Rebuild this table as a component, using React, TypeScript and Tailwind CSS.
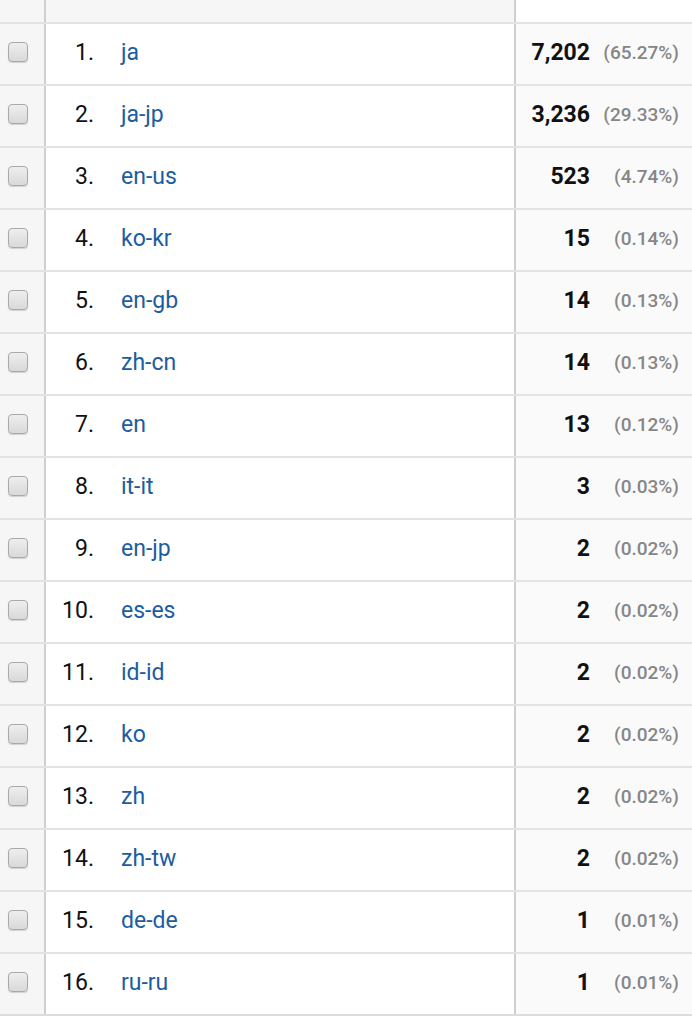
const rows: [string, string, string][] = [
  ["ja", "7,202", "(65.27%)"],
  ["ja-jp", "3,236", "(29.33%)"],
  ["en-us", "523", "(4.74%)"],
  ["ko-kr", "15", "(0.14%)"],
  ["en-gb", "14", "(0.13%)"],
  ["zh-cn", "14", "(0.13%)"],
  ["en", "13", "(0.12%)"],
  ["it-it", "3", "(0.03%)"],
  ["en-jp", "2", "(0.02%)"],
  ["es-es", "2", "(0.02%)"],
  ["id-id", "2", "(0.02%)"],
  ["ko", "2", "(0.02%)"],
  ["zh", "2", "(0.02%)"],
  ["zh-tw", "2", "(0.02%)"],
  ["de-de", "1", "(0.01%)"],
  ["ru-ru", "1", "(0.01%)"],
];

function Checkbox() {
  return (
    <span className="block w-[20px] h-[20px] rounded-[4px] border-[1.5px] border-[#a9a9a9] bg-gradient-to-b from-[#eeeeee] to-[#d9d9d9] shadow-[0_1px_1px_rgba(0,0,0,0.15)]" />
  );
}

export default function App() {
  return (
    <div className="w-[692px] bg-white font-['Roboto',sans-serif] text-[#111]">
      <div className="flex h-[24px] border-b-2 border-[#e3e3e3]">
        <div className="w-[46px] bg-[#f6f6f6] border-r-2 border-[#cfcfcf]" />
        <div className="w-[470px] bg-[#f6f6f6] border-r-2 border-[#cfcfcf]" />
        <div className="flex-1 bg-white" />
      </div>
      {rows.map(([label, value, pct], i) => (
        <div
          key={label}
          className={
            "flex h-[62px] border-b-2 " +
            (i === rows.length - 1 ? "border-[#dcdcdc]" : "border-[#e3e3e3]")
          }
        >
          <div className="w-[46px] bg-[#f6f6f6] border-r-2 border-[#cfcfcf] flex items-center pl-[8px] pb-[4px]">
            <Checkbox />
          </div>
          <div className="w-[470px] border-r-2 border-[#cfcfcf] flex items-center pb-[1px] text-[23px]">
            <span className="w-[48px] text-right">{i + 1}.</span>
            <span className="ml-[27px] text-[#1c5d9f]">{label}</span>
          </div>
          <div className="flex-1 bg-[#fafafa] flex items-center pb-[1px]">
            <span className="w-[74px] text-right text-[23px] font-bold">{value}</span>
            <span className="flex-1 text-right pr-[13px] text-[19px] font-medium text-[#868686]">{pct}</span>
          </div>
        </div>
      ))}
    </div>
  );
}
